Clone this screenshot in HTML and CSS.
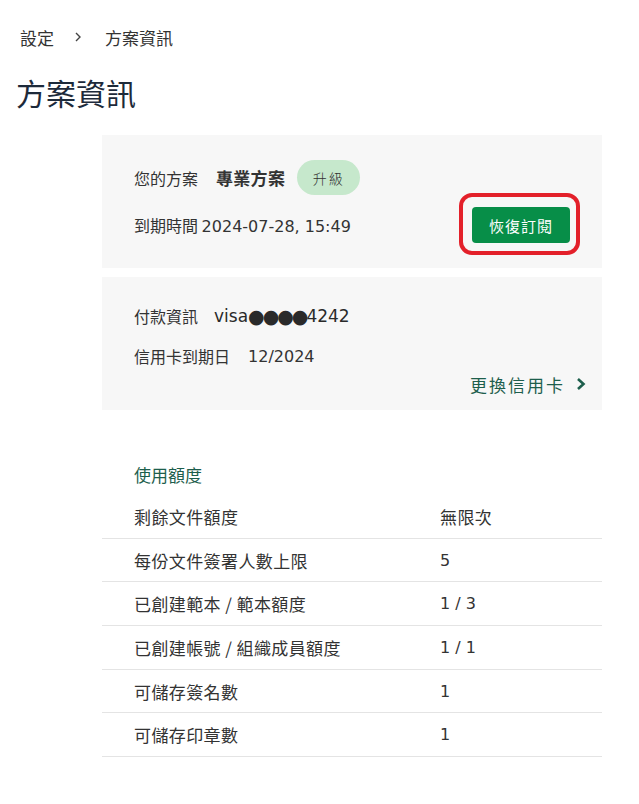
FILE: index.html
```html
<!DOCTYPE html>
<html lang="zh-Hant">
<head>
<meta charset="utf-8">
<title>方案資訊</title>
<link rel="stylesheet" href="styles.css">
</head>
<body>
<div class="page">
  <nav class="crumbs">
    <span class="crumb">設定</span>
    <svg class="crumb-sep" width="8" height="12" viewBox="0 0 8 12"><path d="M2 2 L6 6 L2 10" fill="none" stroke="#444" stroke-width="1.4"/></svg>
    <span class="crumb">方案資訊</span>
  </nav>
  <h1 class="title">方案資訊</h1>
  <main class="content">
    <section class="card plan">
      <div class="row">
        <span class="label">您的方案</span>
        <strong class="plan-name">專業方案</strong>
        <span class="badge">升級</span>
      </div>
      <div class="row spread">
        <span class="label">到期時間 <span class="latin">2024-07-28, 15:49</span></span>
        <span class="btn-wrap">
          <button class="btn">恢復訂閱</button>
          <span class="highlight"></span>
        </span>
      </div>
    </section>
    <section class="card pay">
      <div class="line"><span class="label">付款資訊</span><span class="card-no latin">visa<span class="dots">●●●●</span>4242</span></div>
      <div class="line"><span class="label">信用卡到期日</span><span class="latin exp">12/2024</span></div>
      <div class="link-row">
        <a class="link" href="#">更換信用卡
          <svg width="12" height="14" viewBox="0 0 12 14"><path d="M3 2 L8.5 7 L3 12" fill="none" stroke="#1d5e4c" stroke-width="2.6"/></svg>
        </a>
      </div>
    </section>
    <section class="usage">
      <h2 class="usage-title">使用額度</h2>
      <div class="usage-row"><span>剩餘文件額度</span><span>無限次</span></div>
      <div class="usage-row"><span>每份文件簽署人數上限</span><span class="latin">5</span></div>
      <div class="usage-row"><span>已創建範本 / 範本額度</span><span class="latin">1 / 3</span></div>
      <div class="usage-row"><span>已創建帳號 / 組織成員額度</span><span class="latin">1 / 1</span></div>
      <div class="usage-row"><span>可儲存簽名數</span><span class="latin">1</span></div>
      <div class="usage-row"><span>可儲存印章數</span><span class="latin">1</span></div>
    </section>
  </main>
</div>
</body>
</html>
```
FILE: styles.css
```css
* { box-sizing: border-box; }
html, body { margin: 0; padding: 0; background: #fff; }
body {
  font-family: "Noto Sans CJK TC", "Noto Sans", sans-serif;
  color: #333;
  font-size: 16px;
}
.latin { font-family: "DejaVu Sans", "Noto Sans CJK TC", sans-serif; font-size: 16px; letter-spacing: 0; }
.page { padding: 0 16px; }
.crumbs {
  display: flex;
  align-items: center;
  height: 24px;
  margin-top: 25px;
  padding-left: 4px;
  font-size: 17px;
  color: #333;
}
.crumb-sep { margin: 0 23px 0 20px; }
.title {
  margin: 23px 0 0;
  font-size: 30px;
  font-weight: 400;
  line-height: 40px;
  color: #1d2a3a;
}
.content { margin-left: 86px; width: 500px; margin-top: 23px; }
.card { background: #f7f7f7; }
.plan { padding: 25px 32px; display: flex; flex-direction: column; gap: 12px; }
.row { display: flex; align-items: center; }
.spread { justify-content: space-between; height: 36px; }
.plan-name { margin-left: 18px; font-weight: 700; color: #333; font-size: 17px; letter-spacing: 0.3px; }
.badge {
  margin-left: 12px;
  height: 35px;
  width: 63px;
  border-radius: 18px;
  background: #c6e8cc;
  display: flex;
  align-items: center;
  justify-content: center;
  font-size: 14px;
  font-weight: 300;
  letter-spacing: 2px;
  color: #333;
}
.btn-wrap { position: relative; display: block; height: 36px; }
.btn {
  display: block;
  width: 98px;
  height: 36px;
  border: 0;
  border-radius: 4px;
  background: #078e48;
  color: #fff;
  font-family: inherit;
  font-size: 15px;
  letter-spacing: 1px;
}
.highlight {
  position: absolute;
  top: -14px; left: -13px; right: -10px; bottom: -12px;
  border: 4px solid #e3202a;
  border-radius: 13px;
  pointer-events: none;
}
.pay { margin-top: 9px; padding: 27px 15px 14px 32px; }
.line { display: flex; align-items: center; height: 24px; }
.line + .line { margin-top: 16px; }
.card-no { margin-left: 16px; font-size: 17px; color: #2a2a2a; display: flex; align-items: center; }
.dots { font-size: 19px; letter-spacing: -2px; line-height: 1; font-family: "DejaVu Sans", sans-serif; }
.exp { margin-left: 18px; }
.link-row { display: flex; justify-content: flex-end; margin-top: 4px; height: 24px; align-items: center; }
.link { color: #1d5e4c; text-decoration: none; display: flex; align-items: center; gap: 10px; font-size: 17px; letter-spacing: 2px; }
.usage { margin-top: 53px; }
.usage-title {
  margin: 0 0 8px;
  padding-left: 32px;
  font-size: 17px;
  font-weight: 400;
  line-height: 24px;
  color: #1d5e4c;
}
.usage-row {
  display: grid;
  grid-template-columns: 306px 1fr;
  align-items: center;
  height: 43.7px;
  padding-left: 32px;
  border-bottom: 1px solid #e4e4e4;
  font-size: 17px;
  letter-spacing: 0.4px;
}
```
